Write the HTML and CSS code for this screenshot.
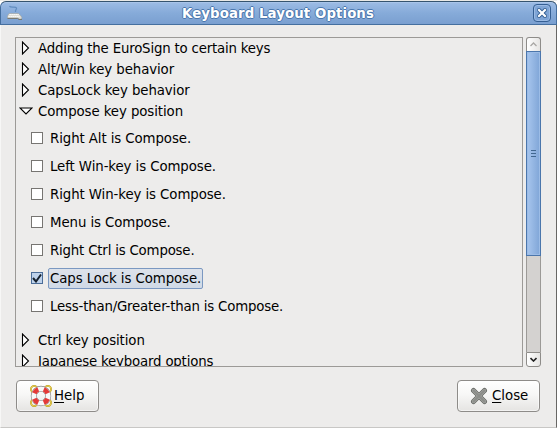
FILE: index.html
```html
<!DOCTYPE html>
<html lang="en">
<head>
<meta charset="utf-8">
<title>Keyboard Layout Options</title>
<link rel="stylesheet" href="styles.css">
</head>
<body>
<div class="backdrop"></div>
<main class="window">
  <header class="titlebar">
    <svg class="app-icon" width="16" height="16" viewBox="0 0 16 16">
      <path d="M2.500 1c1 2.500 6 0 7 2 .5 1.500-1.500 1.500-1 4" fill="none" stroke="#628dbf" stroke-width="1.200"/>
      <path d="M2 8.500h9.500l2.500 2.500 1 2-1 1h-2l-1-1H.5v-2z" fill="#deded7" stroke="#a0a098" stroke-width=".5"/>
      <path d="M2.500 9.500h9M1.500 11.500h11" stroke="#fff" stroke-width="1.200" stroke-dasharray="1.300 .7"/>
      <path d="M.5 13.500h10l1.500 1h3" fill="none" stroke="#7a7a72"/>
    </svg>
    <h1>Keyboard Layout Options</h1>
    <button class="close-box" aria-label="Close window">
      <svg width="10" height="10" viewBox="0 0 10 10"><path d="M2 2l6 6M8 2L2 8" stroke="#315d92" stroke-width="4" stroke-linecap="square"/><path d="M2 2l6 6M8 2L2 8" stroke="#fff" stroke-width="2.200" stroke-linecap="square"/></svg>
    </button>
  </header>
  <section class="content">
    <div class="list">
      <div class="group"><svg class="arrow" width="14" height="14" viewBox="0 0 14 14"><path d="M3.500 1v12l6-6z"/></svg><span class="tight">Adding the EuroSign to certain keys</span></div>
      <div class="group"><svg class="arrow" width="14" height="14" viewBox="0 0 14 14"><path d="M3.500 1v12l6-6z"/></svg><span>Alt/Win key behavior</span></div>
      <div class="group"><svg class="arrow" width="14" height="14" viewBox="0 0 14 14"><path d="M3.500 1v12l6-6z"/></svg><span>CapsLock key behavior</span></div>
      <div class="group"><svg class="arrow" width="14" height="14" viewBox="0 0 14 14"><path d="M1 4h12l-6 6z"/></svg><span>Compose key position</span></div>
      <div class="choices">
        <div class="choice"><i class="box"></i><span class="label">Right Alt is Compose.</span></div>
        <div class="choice"><i class="box"></i><span class="label">Left Win-key is Compose.</span></div>
        <div class="choice"><i class="box"></i><span class="label">Right Win-key is Compose.</span></div>
        <div class="choice"><i class="box"></i><span class="label">Menu is Compose.</span></div>
        <div class="choice"><i class="box"></i><span class="label tight">Right Ctrl is Compose.</span></div>
        <div class="choice"><i class="box checked"><svg width="10" height="10" viewBox="0 0 10 10"><path d="M1 5l3 3.500L9 1.500" fill="none" stroke="#16212e" stroke-width="2"/></svg></i><span class="label focused">Caps Lock is Compose.</span></div>
        <div class="choice"><i class="box"></i><span class="label tight">Less-than/Greater-than is Compose.</span></div>
      </div>
      <div class="group"><svg class="arrow" width="14" height="14" viewBox="0 0 14 14"><path d="M3.500 1v12l6-6z"/></svg><span>Ctrl key position</span></div>
      <div class="group"><svg class="arrow" width="14" height="14" viewBox="0 0 14 14"><path d="M3.500 1v12l6-6z"/></svg><span class="tight">Japanese keyboard options</span></div>
    </div>
    <div class="scrollbar">
      <div class="step up"><svg width="7" height="5" viewBox="0 0 7 5"><path d="M.5 4l3-3 3 3" fill="none" stroke="#aaa8a5" stroke-width="1.300"/></svg></div>
      <div class="thumb"><i></i><i></i><i></i></div>
      <div class="trough"></div>
      <div class="step down"><svg width="7" height="5" viewBox="0 0 7 5"><path d="M.5 1l3 3 3-3" fill="none" stroke="#222" stroke-width="1.600"/></svg></div>
    </div>
  </section>
  <footer class="actions">
    <button class="button help">
      <svg width="22" height="22" viewBox="0 0 22 22" fill="none">
        <g stroke="#b89a18" stroke-width="1.700"><circle cx="4.200" cy="4.200" r="3.300"/><circle cx="17.800" cy="4.200" r="3.300"/><circle cx="4.200" cy="17.800" r="3.300"/><circle cx="17.800" cy="17.800" r="3.300"/></g>
        <g stroke="#f4dc62" stroke-width=".8"><circle cx="4.200" cy="4.200" r="3.300"/><circle cx="17.800" cy="4.200" r="3.300"/><circle cx="4.200" cy="17.800" r="3.300"/><circle cx="17.800" cy="17.800" r="3.300"/></g>
        <circle cx="11" cy="11" r="7.200" stroke="#858585" stroke-width="6"/>
        <circle cx="11" cy="11" r="7.200" stroke="#f8f8f8" stroke-width="4.800"/>
        <circle cx="11" cy="11" r="7.200" stroke="#e43a38" stroke-width="4.800" pathLength="8" stroke-dasharray="1 1" stroke-dashoffset="-.5"/>
      </svg>
      <span><u>H</u>elp</span>
    </button>
    <button class="button close">
      <svg width="18" height="18" viewBox="0 0 18 18" fill="none" stroke-linecap="round"><path d="M3.500 3.500l11 11M14.500 3.500l-11 11" stroke="#666864" stroke-width="5"/><path d="M3.500 3.500l11 11M14.500 3.500l-11 11" stroke="#a4a6a2" stroke-width="3.400"/><path d="M3.500 3.500l11 11M14.500 3.500l-11 11" stroke="#8b8d89" stroke-width="2"/></svg>
      <span><u>C</u>lose</span>
    </button>
  </footer>
</main>
</body>
</html>
```
FILE: styles.css
```css
* { box-sizing: border-box; }
body {
  margin: 0;
  width: 557px;
  height: 428px;
  overflow: hidden;
  background: #fff;
  color: #000;
  font: 13.333px/21px "DejaVu Sans", sans-serif;
}
button { margin: 0; padding: 0; font: inherit; color: inherit; }
.backdrop { height: 1px; background: #e9e9e6; }
.window {
  height: 427px;
  display: flex;
  flex-direction: column;
  background: #edeceb;
  border-left: 1px solid #f7f7f6;
  border-right: 1px solid #686765;
  border-bottom: 1px solid #c8c7c5;
  border-radius: 6px 6px 0 0;
}
.titlebar {
  flex: none;
  height: 24px;
  margin: 0 -1px;
  padding: 0 5px 0 6px;
  display: flex;
  align-items: center;
  border: 1px solid #456f9f;
  border-top-color: #35546f;
  border-radius: 6px 6px 0 0;
  background: linear-gradient(#9dbce5, #86abd9 50%, #7a9fd0);
  box-shadow: inset 0 1px #a9c5ea;
}
.titlebar h1 {
  flex: 1;
  margin: 0;
  text-align: center;
  color: #fff;
  font-size: 13.333px;
  letter-spacing: 0.08px;
  line-height: 20px;
  padding-top: 1px;
  text-shadow: 1px 0 #4a77ad, -1px 0 #4a77ad, 0 1px #4a77ad, 0 -1px #4a77ad;
}
.close-box {
  width: 18px;
  height: 18px;
  display: flex;
  align-items: center;
  justify-content: center;
  border: 1px solid #355f93;
  border-radius: 4px;
  background: #7fa5d6;
  box-shadow: inset 0 0 0 1px #9bbbe4;
}
.content {
  height: 330px;
  margin: 12px 14px 0 14px;
  display: flex;
  gap: 3px;
}
.list {
  width: 508px;
  overflow: hidden;
  border: 1px solid #9c9a97;
  letter-spacing: -0.09px;
}
.group { height: 21px; padding-left: 3px; display: flex; align-items: center; gap: 5px; white-space: nowrap; }
.arrow { flex: none; margin-bottom: 1px; fill: #fff; stroke: #000; stroke-width: 1.1; }
.tight { letter-spacing: -0.19px; }
.choices { padding: 2px 0 10px 15px; }
.choice { height: 28px; display: flex; align-items: center; gap: 5px; }
.box {
  width: 12px;
  height: 12px;
  display: flex;
  align-items: center;
  justify-content: center;
  border: 1px solid #777572;
  background: #fff;
}
.box.checked { background: #bed2eb; border-color: #4b6d98; }
.label { height: 21px; padding: 0 1px; border: 1px solid transparent; line-height: 19px; white-space: nowrap; }
.focused { border-color: #7b98c1; border-radius: 2px; background: linear-gradient(#dde2ea, #d0d9e6); }
.scrollbar { width: 15px; display: flex; flex-direction: column; }
.step { height: 15px; display: flex; align-items: center; justify-content: center; border: 1px solid #8e8c89; background: linear-gradient(90deg, #fff, #e6e5e3); }
.up { height: 14px; border-bottom: 0; border-radius: 3px 3px 0 0; }
.down { border-radius: 0 0 3px 3px; }
.thumb {
  height: 205px;
  display: flex;
  flex-direction: column;
  align-items: center;
  justify-content: center;
  gap: 2px;
  border: 1px solid #4b76ac;
  background: linear-gradient(90deg, #a8c6ee, #7fa5d7);
  box-shadow: inset 0 0 0 1px #9cbce6;
}
.thumb i { width: 5px; height: 1px; background: #41678f; }
.trough { flex: 1; border: solid #9c9a97; border-width: 0 1px; background: #d4d2d0; }
.actions { margin: 13px 16px 0 15px; display: flex; justify-content: space-between; }
.button {
  width: 83px;
  height: 32px;
  display: flex;
  align-items: center;
  border: 1px solid #8e8c89;
  border-radius: 4px;
  background: linear-gradient(#fff, #f7f7f6 45%, #e5e4e2);
  box-shadow: inset 0 0 0 1px #fff8;
}
.button u { text-underline-offset: 2px; text-decoration-thickness: 1px; }
.button span { position: relative; top: -1px; }
.help { padding-left: 13px; gap: 2px; }
.close { padding-left: 12px; gap: 4px; }
```
